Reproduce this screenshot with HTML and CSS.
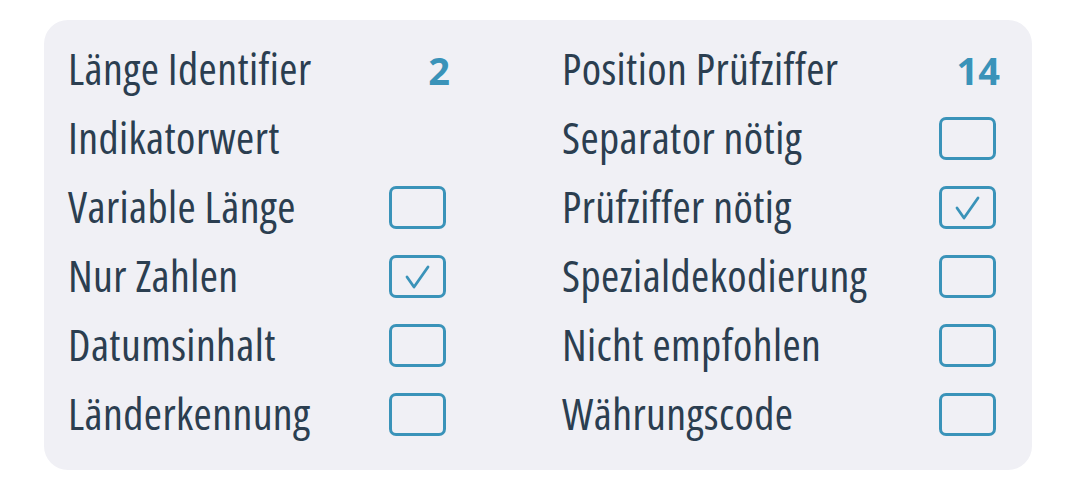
FILE: index.html
```html
<!DOCTYPE html>
<html lang="de">

<head>
    <meta charset="UTF-8">
    <meta name="viewport" content="width=device-width, initial-scale=1.0">
    <title>AI Details</title>
    <link rel="stylesheet" href="styles.css">
</head>

<body>
    <section class="card">
        <div class="column left">
            <div class="row"><span class="label">Länge Identifier</span><span class="value">2</span></div>
            <div class="row"><span class="label">Indikatorwert</span></div>
            <div class="row"><span class="label">Variable Länge</span><span class="check"></span></div>
            <div class="row"><span class="label">Nur Zahlen</span><span class="check on"><svg viewBox="0 0 57 43"><path d="M18 22 L25 32 L39 12"/></svg></span></div>
            <div class="row"><span class="label">Datumsinhalt</span><span class="check"></span></div>
            <div class="row"><span class="label">Länderkennung</span><span class="check"></span></div>
        </div>
        <div class="column right">
            <div class="row"><span class="label">Position Prüfziffer</span><span class="value">14</span></div>
            <div class="row"><span class="label">Separator nötig</span><span class="check"></span></div>
            <div class="row"><span class="label">Prüfziffer nötig</span><span class="check on"><svg viewBox="0 0 57 43"><path d="M18 22 L25 32 L39 12"/></svg></span></div>
            <div class="row"><span class="label">Spezialdekodierung</span><span class="check"></span></div>
            <div class="row"><span class="label">Nicht empfohlen</span><span class="check"></span></div>
            <div class="row"><span class="label">Währungscode</span><span class="check"></span></div>
        </div>
    </section>
</body>

</html>
```

FILE: styles.css
```css
body {
    margin: 0;
    background-color: white;
    font-family: "Open Sans", "DejaVu Sans", sans-serif;
    color: #2b3e50;
}

.card {
    display: flex;
    gap: 112px;
    margin: 20px 46px 20px 44px;
    padding: 15px 32px 21px 24px;
    background-color: #f0f0f5;
    border-radius: 24px;
}

.column {
    display: flex;
    flex-direction: column;
}

.left {
    width: 382px;
}

.right {
    width: 438px;
}

.row {
    display: flex;
    align-items: center;
    justify-content: space-between;
    height: 69px;
}

.label {
    font-size: 44px;
    font-weight: 400;
    font-stretch: 75%;
    letter-spacing: 0.4px;
    line-height: 1;
    padding-bottom: 4px;
    white-space: nowrap;
}

.value {
    font-size: 38px;
    font-weight: 700;
    color: #3a93b9;
}

.check {
    width: 57px;
    height: 43px;
    margin-right: 4px;
    border: 3px solid #3a93b9;
    border-radius: 7px;
    box-sizing: border-box;
}

.check svg {
    display: block;
    margin: -3px;
    width: 57px;
    height: 43px;
    fill: none;
    stroke: #3a93b9;
    stroke-width: 2.8;
    stroke-linecap: round;
    stroke-linejoin: round;
}
```
